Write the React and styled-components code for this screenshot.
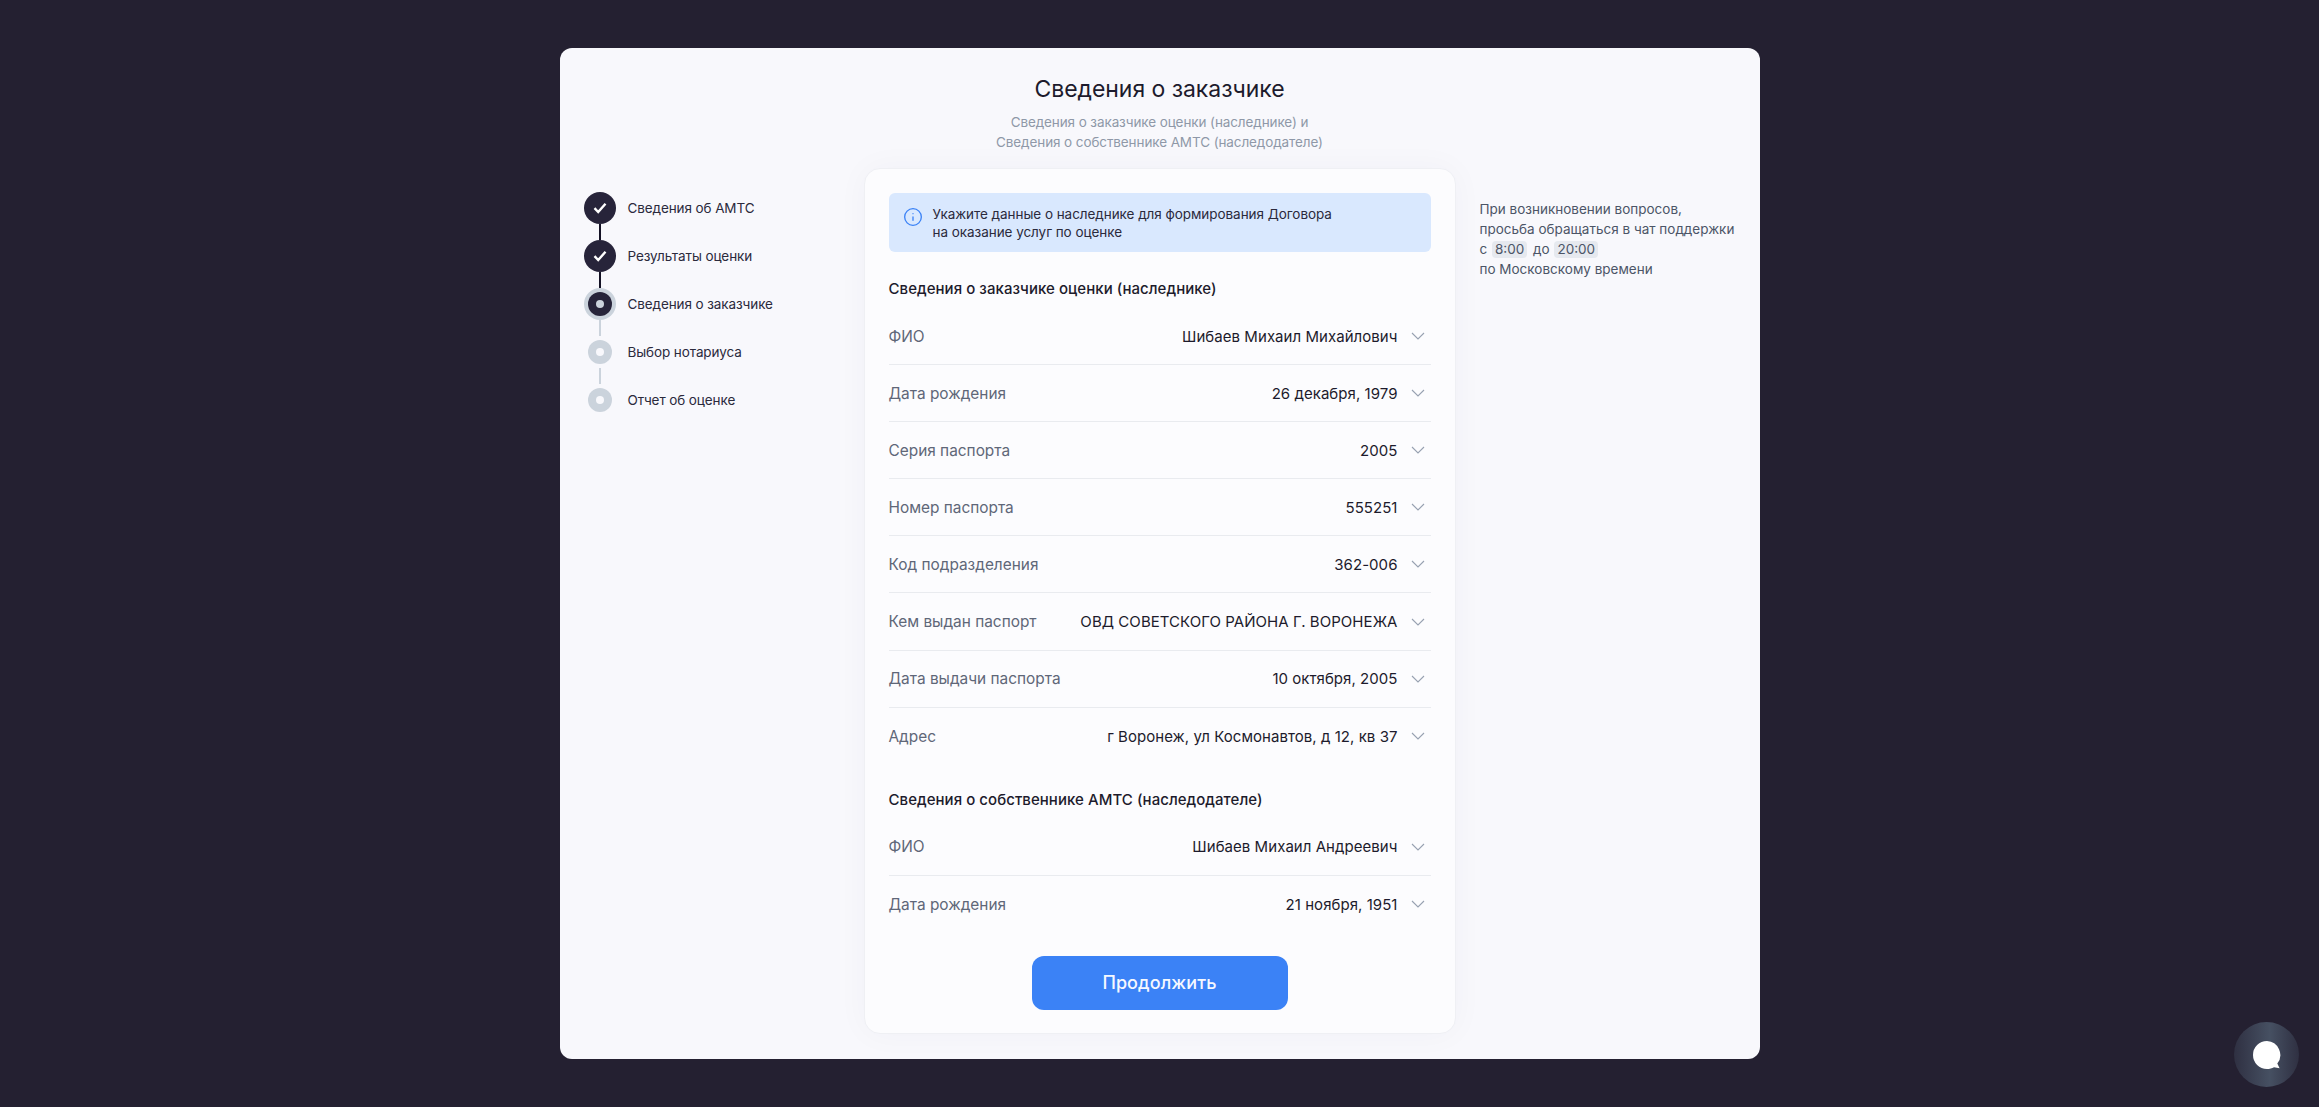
import React from "react";
import styled, { createGlobalStyle } from "styled-components";
import { Info } from "lucide-react";

const GlobalStyle = createGlobalStyle`
  html, body {
    margin: 0;
    padding: 0;
    background: #242031;
  }
  body {
    font-family: Inter, "Noto Sans", sans-serif;
    color: #1d1b2c;
  }
`;

const Page = styled.div`
  min-height: 1107px;
  box-sizing: border-box;
  padding: 48px 0;
`;

const Panel = styled.main`
  width: 1200px;
  height: 1011px;
  margin: 0 auto;
  box-sizing: border-box;
  background: #f8f8fc;
  border-radius: 12px;
  display: flex;
  flex-direction: column;
`;

const Header = styled.header`
  height: 120px;
  padding-top: 27px;
  box-sizing: border-box;
  text-align: center;
`;

const Title = styled.h1`
  margin: 0 0 9px;
  font-size: 23px;
  line-height: 28px;
  font-weight: 400;
  letter-spacing: -0.05px;
`;

const Subtitle = styled.p`
  margin: 0;
  font-size: 13.5px;
  line-height: 20px;
  letter-spacing: -0.1px;
  color: #8f98a8;
`;

const Columns = styled.div`
  display: grid;
  grid-template-columns: 304px 592px 1fr;
  flex: 1;
`;

const Stepper = styled.ol`
  list-style: none;
  margin: 0;
  padding: 24px 0 0 24px;
`;

const Step = styled.li`
  display: flex;
  align-items: center;
  height: 32px;
  margin-bottom: 16px;
  position: relative;
  font-size: 13.5px;
  letter-spacing: -0.1px;
  color: #2b2a3c;

  &:not(:last-child)::after {
    content: "";
    position: absolute;
    left: 15px;
    top: 32px;
    width: 2px;
    height: 16px;
    background: ${(p) => (p.$state === "done" ? "#141225" : "#cbd3dc")};
  }
`;

const Marker = styled.span`
  width: 32px;
  height: 32px;
  flex: none;
  margin-right: 12px;
  display: flex;
  align-items: center;
  justify-content: center;
`;

const DoneDot = styled.span`
  width: 32px;
  height: 32px;
  border-radius: 50%;
  background: #27243a;
  display: flex;
  align-items: center;
  justify-content: center;
`;

const ActiveDot = styled.span`
  width: 24px;
  height: 24px;
  border-radius: 50%;
  background: #27243a;
  box-shadow: 0 0 0 4px #cbd3dc;
  display: flex;
  align-items: center;
  justify-content: center;

  &::after {
    content: "";
    width: 8px;
    height: 8px;
    border-radius: 50%;
    background: #cbd3dc;
  }
`;

const TodoDot = styled.span`
  width: 24px;
  height: 24px;
  border-radius: 50%;
  background: #cbd3dc;
  display: flex;
  align-items: center;
  justify-content: center;

  &::after {
    content: "";
    width: 8px;
    height: 8px;
    border-radius: 50%;
    background: #f8f8fc;
  }
`;

const Card = styled.section`
  height: 866px;
  box-sizing: border-box;
  padding: 24px;
  background: #fcfcfe;
  border: 1px solid #eff0f4;
  border-radius: 16px;
  box-shadow: 0 0 32px rgba(40, 40, 80, 0.035);
`;

const Notice = styled.div`
  height: 59px;
  box-sizing: border-box;
  padding: 12px 14px;
  display: flex;
  gap: 10px;
  background: #d9e8fe;
  border-radius: 6px;
  font-size: 13.5px;
  line-height: 18px;
  letter-spacing: -0.05px;
  color: #2b2a3c;

  svg {
    color: #3b82f6;
    flex: none;
    margin-top: 2px;
  }
`;

const SectionTitle = styled.h2`
  margin: ${(p) => p.$top}px 0 7px;
  height: 24px;
  font-size: 15px;
  line-height: 24px;
  font-weight: 500;
  letter-spacing: 0.05px;
`;

const Row = styled.div`
  height: 57.1px;
  box-sizing: border-box;
  display: flex;
  align-items: center;
  justify-content: space-between;
  padding-right: 6px;
  border-bottom: 1px solid #e9ebef;

  &:last-of-type {
    border-bottom: none;
  }
`;

const Label = styled.span`
  font-size: 15.4px;
  color: #5f6778;
`;

const Value = styled.span`
  display: flex;
  align-items: center;
  gap: 13px;
  font-size: 15px;
  letter-spacing: 0.05px;
  color: #1d1b2c;
`;

const Chevron = styled.svg`
  width: 14px;
  height: 8px;
  fill: none;
  stroke: #97a1b1;
  stroke-width: 1.1;
`;

const ContinueButton = styled.button`
  display: block;
  width: 256px;
  height: 54px;
  margin: 23px auto 0;
  border: none;
  border-radius: 12px;
  background: #3b82f6;
  color: #f5f8ff;
  font-family: inherit;
  font-size: 18px;
  font-weight: 500;
  letter-spacing: 0.1px;
`;

const Aside = styled.aside`
  padding: 31px 0 0 24px;
  font-size: 13.5px;
  line-height: 20px;
  color: #4c5567;
`;

const Time = styled.span`
  display: inline-block;
  margin: 0 2px 0 1px;
  padding: 0 3px;
  line-height: 17px;
  background: #e6e9ef;
  border-radius: 4px;
`;

const ChatButton = styled.button`
  position: fixed;
  left: 2234px;
  top: 1022px;
  width: 65px;
  height: 65px;
  padding: 0;
  border: none;
  border-radius: 50%;
  background: linear-gradient(90deg, #2f3042, #465062 55%, #2f3042);
  display: flex;
  align-items: center;
  justify-content: center;
`;

const steps = [
  { title: "Сведения об АМТС", state: "done" },
  { title: "Результаты оценки", state: "done" },
  { title: "Сведения о заказчике", state: "active" },
  { title: "Выбор нотариуса", state: "todo" },
  { title: "Отчет об оценке", state: "todo" },
];

const buyer = [
  ["ФИО", "Шибаев Михаил Михайлович"],
  ["Дата рождения", "26 декабря, 1979"],
  ["Серия паспорта", "2005"],
  ["Номер паспорта", "555251"],
  ["Код подразделения", "362-006"],
  ["Кем выдан паспорт", "ОВД СОВЕТСКОГО РАЙОНА Г. ВОРОНЕЖА"],
  ["Дата выдачи паспорта", "10 октября, 2005"],
  ["Адрес", "г Воронеж, ул Космонавтов, д 12, кв 37"],
];

const owner = [
  ["ФИО", "Шибаев Михаил Андреевич"],
  ["Дата рождения", "21 ноября, 1951"],
];

const StepMarker = ({ state }) => {
  if (state === "done") {
    return (
      <DoneDot>
        <svg width="14" height="12" viewBox="0 0 14 12" fill="none" stroke="#fff" strokeWidth="2.4">
          <path d="M1.5 6.2 5.2 10 12.5 1.8" />
        </svg>
      </DoneDot>
    );
  }
  return state === "active" ? <ActiveDot /> : <TodoDot />;
};

const Rows = ({ items }) => (
  <div>
    {items.map(([label, value]) => (
      <Row key={label}>
        <Label>{label}</Label>
        <Value>
          {value}
          <Chevron viewBox="0 0 14 8">
            <path d="M1 1l6 6 6-6" />
          </Chevron>
        </Value>
      </Row>
    ))}
  </div>
);

const App = () => (
  <Page>
    <GlobalStyle />
    <Panel>
      <Header>
        <Title>Сведения о заказчике</Title>
        <Subtitle>
          Сведения о заказчике оценки (наследнике) и
          <br />
          Сведения о собственнике АМТС (наследодателе)
        </Subtitle>
      </Header>
      <Columns>
        <Stepper>
          {steps.map((step) => (
            <Step key={step.title} $state={step.state}>
              <Marker>
                <StepMarker state={step.state} />
              </Marker>
              {step.title}
            </Step>
          ))}
        </Stepper>
        <Card>
          <Notice>
            <Info size={20} strokeWidth={1.6} />
            <div>
              Укажите данные о наследнике для формирования Договора
              <br />
              на оказание услуг по оценке
            </div>
          </Notice>
          <SectionTitle $top={25}>Сведения о заказчике оценки (наследнике)</SectionTitle>
          <Rows items={buyer} />
          <SectionTitle $top={23}>Сведения о собственнике АМТС (наследодателе)</SectionTitle>
          <Rows items={owner} />
          <ContinueButton>Продолжить</ContinueButton>
        </Card>
        <Aside>
          При возникновении вопросов,
          <br />
          просьба обращаться в чат поддержки
          <br />с <Time>8:00</Time> до <Time>20:00</Time>
          <br />
          по Московскому времени
        </Aside>
      </Columns>
    </Panel>
    <ChatButton aria-label="Чат поддержки">
      <svg width="30" height="30" viewBox="0 0 30 30">
        <path
          fill="#fff"
          d="M15 1a14 14 0 1 0 0 28c2.6 0 5-.6 7-1.8l5.6 1-2.3-4.6A14 14 0 0 0 15 1z"
        />
      </svg>
    </ChatButton>
  </Page>
);

export default App;
